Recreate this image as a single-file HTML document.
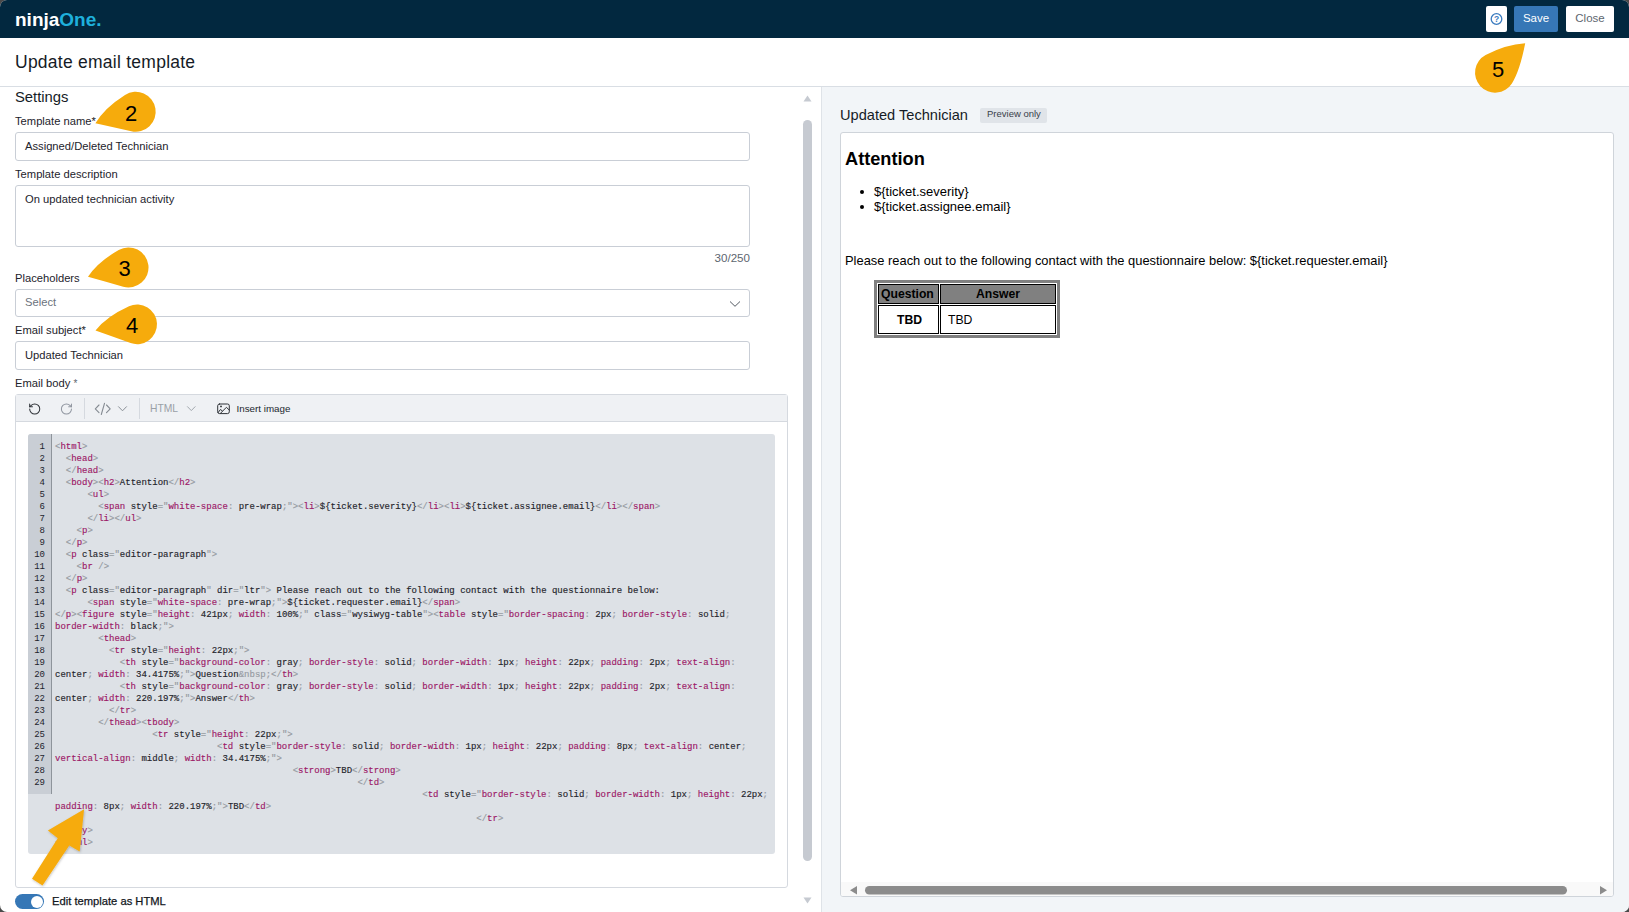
<!DOCTYPE html>
<html><head><meta charset="utf-8">
<style>
*{box-sizing:border-box;margin:0;padding:0}
html,body{width:1629px;height:912px;overflow:hidden;background:#4a4a4a;font-family:"Liberation Sans",sans-serif;color:#1d232c}
#modal{position:absolute;left:0;top:0;width:1629px;height:912px;background:#fff;border-radius:7px;overflow:hidden}
.a{position:absolute;white-space:nowrap;line-height:1}
#hdr{position:absolute;left:0;top:0;width:1629px;height:38px;background:#02283f}
.logo{left:15px;top:10px;font-size:19px;font-weight:bold;color:#fff}
.logo span{color:#1eb0dc}
.btn{position:absolute;top:6px;height:26px;border-radius:2px;font-size:11.5px;line-height:24.5px;text-align:center}
#sep{position:absolute;left:0;top:86px;width:1629px;height:1px;background:#d9dee4}
#right{position:absolute;left:821px;top:87px;width:808px;height:825px;background:#f2f5f8;border-left:1px solid #dfe3e8}
.lbl{font-size:11.2px;color:#1d232c}
.box{position:absolute;border:1px solid #c9ced6;border-radius:3px;background:#fff}
#editor{position:absolute;left:15px;top:394px;width:773px;height:494px;border:1px solid #d5d9df;border-radius:3px;background:#fff}
#tb{position:absolute;left:0;top:0;width:771px;height:27px;background:#eff1f4;border-bottom:1px solid #d5d9df}
#cblk{position:absolute;left:28px;top:434px;width:747px;height:420px;background:#dde1e6;border-radius:3px;overflow:hidden}
#gutbg{position:absolute;left:0;top:0;width:24px;height:360px;background:#c9ced5;border-right:1px solid #8e949b}
#gut{position:absolute;left:0;top:7px;width:17px;text-align:right;font-family:"Liberation Mono",monospace;font-size:9px;line-height:12px;color:#1d232c}
#code{position:absolute;left:27px;top:7px;font-family:"Liberation Mono",monospace;font-size:9px;line-height:12px;color:#1f242b;-webkit-text-stroke:0.15px}
#code i{font-style:normal}
#code i.g{color:#969ba2}
#code i.t{color:#9c1866}
.sbar{position:absolute;background:#c6cad1;border-radius:5px}
</style></head><body>
<div id="modal">
 <div id="hdr">
  <div class="a logo">ninja<span>One.</span></div>
  <div class="btn" style="left:1486px;width:21px;background:#fff">
   <svg width="21" height="26" viewBox="0 0 21 26" style="position:absolute;left:0;top:0"><circle cx="10.5" cy="13" r="5.3" fill="none" stroke="#3a7bbf" stroke-width="1.3"/><text x="10.5" y="16.2" font-size="8.5" font-weight="bold" text-anchor="middle" fill="#3a7bbf" font-family="Liberation Sans">?</text></svg>
  </div>
  <div class="btn" style="left:1514px;width:44px;background:#3677b6;color:#fff">Save</div>
  <div class="btn" style="left:1566px;width:48px;background:#fff;color:#5d6670">Close</div>
 </div>
 <div class="a" style="left:15px;top:54px;font-size:17.5px;letter-spacing:0.25px;color:#151b26">Update email template</div>
 <div id="sep"></div>

 <!-- left panel -->
 <div class="a" style="left:15px;top:90px;font-size:14.8px;color:#151b26">Settings</div>
 <div class="a lbl" style="left:15px;top:116px">Template name*</div>
 <div class="box" style="left:15px;top:132px;width:735px;height:29px"></div>
 <div class="a lbl" style="left:25px;top:141px">Assigned/Deleted Technician</div>
 <div class="a lbl" style="left:15px;top:169px">Template description</div>
 <div class="box" style="left:15px;top:185px;width:735px;height:62px"></div>
 <div class="a lbl" style="left:25px;top:194px">On updated technician activity</div>
 <div class="a lbl" style="left:650px;width:100px;text-align:right;top:252px;font-size:11.6px;color:#5d6670">30/250</div>
 <div class="a lbl" style="left:15px;top:273px">Placeholders</div>
 <div class="box" style="left:15px;top:289px;width:735px;height:28px"></div>
 <div class="a lbl" style="left:25px;top:297px;color:#6b737d">Select</div>
 <svg class="a" style="left:729px;top:299.5px" width="12" height="8" viewBox="0 0 12 8"><path d="M1 1.5 L6 6.3 L11 1.5" fill="none" stroke="#3f4750" stroke-width="0.9"/></svg>
 <div class="a lbl" style="left:15px;top:325px">Email subject*</div>
 <div class="box" style="left:15px;top:341px;width:735px;height:29px"></div>
 <div class="a lbl" style="left:25px;top:350px">Updated Technician</div>
 <div class="a lbl" style="left:15px;top:378px">Email body <span style="color:#5d6670;font-size:10px;position:relative;top:0px">*</span></div>

 <div id="editor">
  <div id="tb"></div>
 </div>
 <div class="a" style="left:150px;top:404px;font-size:10.3px;color:#9aa0a7">HTML</div>
 <div class="a" style="left:236.5px;top:403.5px;font-size:9.8px;color:#22272e">Insert image</div>
 <div id="cblk">
  <div id="gutbg"></div>
  <div id="gut">1<br>2<br>3<br>4<br>5<br>6<br>7<br>8<br>9<br>10<br>11<br>12<br>13<br>14<br>15<br>16<br>17<br>18<br>19<br>20<br>21<br>22<br>23<br>24<br>25<br>26<br>27<br>28<br>29</div><pre id="code"><i class="g">&lt;</i><i class="t">html</i><i class="g">&gt;</i>
  <i class="g">&lt;</i><i class="t">head</i><i class="g">&gt;</i>
  <i class="g">&lt;/</i><i class="t">head</i><i class="g">&gt;</i>
  <i class="g">&lt;</i><i class="t">body</i><i class="g">&gt;</i><i class="g">&lt;</i><i class="t">h2</i><i class="g">&gt;</i>Attention<i class="g">&lt;/</i><i class="t">h2</i><i class="g">&gt;</i>
      <i class="g">&lt;</i><i class="t">ul</i><i class="g">&gt;</i>
        <i class="g">&lt;</i><i class="t">span</i> style<i class="g">=</i><i class="g">"</i><i class="t">white-space</i><i class="g">:</i> pre-wrap<i class="g">;</i><i class="g">"</i><i class="g">&gt;</i><i class="g">&lt;</i><i class="t">li</i><i class="g">&gt;</i>${ticket.severity}<i class="g">&lt;/</i><i class="t">li</i><i class="g">&gt;</i><i class="g">&lt;</i><i class="t">li</i><i class="g">&gt;</i>${ticket.assignee.email}<i class="g">&lt;/</i><i class="t">li</i><i class="g">&gt;</i><i class="g">&lt;/</i><i class="t">span</i><i class="g">&gt;</i>
      <i class="g">&lt;/</i><i class="t">li</i><i class="g">&gt;</i><i class="g">&lt;/</i><i class="t">ul</i><i class="g">&gt;</i>
    <i class="g">&lt;</i><i class="t">p</i><i class="g">&gt;</i>
  <i class="g">&lt;/</i><i class="t">p</i><i class="g">&gt;</i>
  <i class="g">&lt;</i><i class="t">p</i> class<i class="g">=</i><i class="g">"</i>editor-paragraph<i class="g">"</i><i class="g">&gt;</i>
    <i class="g">&lt;</i><i class="t">br</i> <i class="g">/&gt;</i>
  <i class="g">&lt;/</i><i class="t">p</i><i class="g">&gt;</i>
  <i class="g">&lt;</i><i class="t">p</i> class<i class="g">=</i><i class="g">"</i>editor-paragraph<i class="g">"</i> dir<i class="g">=</i><i class="g">"</i>ltr<i class="g">"</i><i class="g">&gt;</i> Please reach out to the following contact with the questionnaire below:
      <i class="g">&lt;</i><i class="t">span</i> style<i class="g">=</i><i class="g">"</i><i class="t">white-space</i><i class="g">:</i> pre-wrap<i class="g">;</i><i class="g">"</i><i class="g">&gt;</i>${ticket.requester.email}<i class="g">&lt;/</i><i class="t">span</i><i class="g">&gt;</i>
<i class="g">&lt;/</i><i class="t">p</i><i class="g">&gt;</i><i class="g">&lt;</i><i class="t">figure</i> style<i class="g">=</i><i class="g">"</i><i class="t">height</i><i class="g">:</i> 421px<i class="g">;</i> <i class="t">width</i><i class="g">:</i> 100%<i class="g">;</i><i class="g">"</i> class<i class="g">=</i><i class="g">"</i>wysiwyg-table<i class="g">"</i><i class="g">&gt;</i><i class="g">&lt;</i><i class="t">table</i> style<i class="g">=</i><i class="g">"</i><i class="t">border-spacing</i><i class="g">:</i> 2px<i class="g">;</i> <i class="t">border-style</i><i class="g">:</i> solid<i class="g">;</i>
<i class="t">border-width</i><i class="g">:</i> black<i class="g">;</i><i class="g">"</i><i class="g">&gt;</i>
        <i class="g">&lt;</i><i class="t">thead</i><i class="g">&gt;</i>
          <i class="g">&lt;</i><i class="t">tr</i> style<i class="g">=</i><i class="g">"</i><i class="t">height</i><i class="g">:</i> 22px<i class="g">;</i><i class="g">"</i><i class="g">&gt;</i>
            <i class="g">&lt;</i><i class="t">th</i> style<i class="g">=</i><i class="g">"</i><i class="t">background-color</i><i class="g">:</i> gray<i class="g">;</i> <i class="t">border-style</i><i class="g">:</i> solid<i class="g">;</i> <i class="t">border-width</i><i class="g">:</i> 1px<i class="g">;</i> <i class="t">height</i><i class="g">:</i> 22px<i class="g">;</i> <i class="t">padding</i><i class="g">:</i> 2px<i class="g">;</i> <i class="t">text-align</i><i class="g">:</i>
center<i class="g">;</i> <i class="t">width</i><i class="g">:</i> 34.4175%<i class="g">;</i><i class="g">"</i><i class="g">&gt;</i>Question<i class="g">&amp;nbsp;</i><i class="g">&lt;/</i><i class="t">th</i><i class="g">&gt;</i>
            <i class="g">&lt;</i><i class="t">th</i> style<i class="g">=</i><i class="g">"</i><i class="t">background-color</i><i class="g">:</i> gray<i class="g">;</i> <i class="t">border-style</i><i class="g">:</i> solid<i class="g">;</i> <i class="t">border-width</i><i class="g">:</i> 1px<i class="g">;</i> <i class="t">height</i><i class="g">:</i> 22px<i class="g">;</i> <i class="t">padding</i><i class="g">:</i> 2px<i class="g">;</i> <i class="t">text-align</i><i class="g">:</i>
center<i class="g">;</i> <i class="t">width</i><i class="g">:</i> 220.197%<i class="g">;</i><i class="g">"</i><i class="g">&gt;</i>Answer<i class="g">&lt;/</i><i class="t">th</i><i class="g">&gt;</i>
          <i class="g">&lt;/</i><i class="t">tr</i><i class="g">&gt;</i>
        <i class="g">&lt;/</i><i class="t">thead</i><i class="g">&gt;</i><i class="g">&lt;</i><i class="t">tbody</i><i class="g">&gt;</i>
                  <i class="g">&lt;</i><i class="t">tr</i> style<i class="g">=</i><i class="g">"</i><i class="t">height</i><i class="g">:</i> 22px<i class="g">;</i><i class="g">"</i><i class="g">&gt;</i>
                              <i class="g">&lt;</i><i class="t">td</i> style<i class="g">=</i><i class="g">"</i><i class="t">border-style</i><i class="g">:</i> solid<i class="g">;</i> <i class="t">border-width</i><i class="g">:</i> 1px<i class="g">;</i> <i class="t">height</i><i class="g">:</i> 22px<i class="g">;</i> <i class="t">padding</i><i class="g">:</i> 8px<i class="g">;</i> <i class="t">text-align</i><i class="g">:</i> center<i class="g">;</i>
<i class="t">vertical-align</i><i class="g">:</i> middle<i class="g">;</i> <i class="t">width</i><i class="g">:</i> 34.4175%<i class="g">;</i><i class="g">"</i><i class="g">&gt;</i>
                                            <i class="g">&lt;</i><i class="t">strong</i><i class="g">&gt;</i>TBD<i class="g">&lt;/</i><i class="t">strong</i><i class="g">&gt;</i>
                                                        <i class="g">&lt;/</i><i class="t">td</i><i class="g">&gt;</i>
                                                                    <i class="g">&lt;</i><i class="t">td</i> style<i class="g">=</i><i class="g">"</i><i class="t">border-style</i><i class="g">:</i> solid<i class="g">;</i> <i class="t">border-width</i><i class="g">:</i> 1px<i class="g">;</i> <i class="t">height</i><i class="g">:</i> 22px<i class="g">;</i>
<i class="t">padding</i><i class="g">:</i> 8px<i class="g">;</i> <i class="t">width</i><i class="g">:</i> 220.197%<i class="g">;</i><i class="g">"</i><i class="g">&gt;</i>TBD<i class="g">&lt;/</i><i class="t">td</i><i class="g">&gt;</i>
                                                                              <i class="g">&lt;/</i><i class="t">tr</i><i class="g">&gt;</i>
<i class="g">&lt;/</i><i class="t">body</i><i class="g">&gt;</i>
<i class="g">&lt;/</i><i class="t">html</i><i class="g">&gt;</i></pre>
 </div>

 <!-- scrollbar left -->
 <svg class="a" style="left:803px;top:94px" width="9" height="8" viewBox="0 0 9 8"><path d="M0.5 7.5 L4.5 1.5 L8.5 7.5Z" fill="#c6cad1"/></svg>
 <div class="sbar" style="left:803px;top:120px;width:9px;height:741px"></div>
 <svg class="a" style="left:803px;top:897px" width="9" height="8" viewBox="0 0 9 8"><path d="M0.5 0.5 L4.5 6.5 L8.5 0.5Z" fill="#c6cad1"/></svg>

 <!-- toggle -->
 <div class="a" style="left:15px;top:894px;width:29px;height:15px;border-radius:7.5px;background:#3677b6"></div>
 <div class="a" style="left:31px;top:895.5px;width:12px;height:12px;border-radius:6px;background:#fff"></div>
 <div class="a lbl" style="left:52px;top:896px;color:#12161c;-webkit-text-stroke:0.25px #12161c">Edit template as HTML</div>

 <div id="right"></div>
 <div class="a" style="left:840px;top:107.5px;font-size:14.6px;color:#151b26">Updated Technician</div>
 <div class="a" style="left:980px;top:108px;width:67px;height:15px;background:#e0e4e9;border-radius:2px"></div>
 <div class="a" style="left:987px;top:109px;font-size:9.5px;color:#3a414a">Preview only</div>
 <div class="a" style="left:840px;top:132px;width:774px;height:765px;background:#fff;border:1px solid #cfd4da;border-radius:3px;overflow:hidden">
  <div class="a" style="left:4px;top:17px;font-size:18.2px;font-weight:bold;color:#000">Attention</div>
  <div class="a" style="left:18.5px;top:57px;width:4px;height:4px;border-radius:50%;background:#000"></div>
  <div class="a" style="left:33px;top:52px;font-size:13px;color:#000">${ticket.severity}</div>
  <div class="a" style="left:18.5px;top:72px;width:4px;height:4px;border-radius:50%;background:#000"></div>
  <div class="a" style="left:33px;top:67px;font-size:13px;color:#000">${ticket.assignee.email}</div>
  <div class="a" style="left:4px;top:122px;font-size:12.9px;color:#000">Please reach out to the following contact with the questionnaire below: ${ticket.requester.email}</div>
  <div class="a" style="left:33px;top:147px;width:186px;height:58px;border:3px solid #808080;background:#fff"></div>
  <div class="a" style="left:37px;top:151px;width:61px;height:20px;border:1px solid #000;background:#808080"></div>
  <div class="a" style="left:99px;top:151px;width:116px;height:20px;border:1px solid #000;background:#808080"></div>
  <div class="a" style="left:37px;top:172px;width:61px;height:29px;border:1px solid #000;background:#fff"></div>
  <div class="a" style="left:99px;top:172px;width:116px;height:29px;border:1px solid #000;background:#fff"></div>
  <div class="a" style="left:40px;top:155px;font-size:12.2px;font-weight:bold;color:#000">Question</div>
  <div class="a" style="left:135px;top:155px;font-size:12.2px;font-weight:bold;color:#000">Answer</div>
  <div class="a" style="left:56px;top:181px;font-size:12.2px;font-weight:bold;color:#000">TBD</div>
  <div class="a" style="left:107px;top:181px;font-size:12.2px;color:#000">TBD</div>
  <div class="a" style="left:0;top:749px;width:772px;height:15px;background:#f9f9f9"></div>
  <svg class="a" style="left:0;top:0" width="772" height="764" viewBox="840 132 772 764">
   <path d="M856 885 L849 889.2 L856 893.5Z" fill="#8c8c8c"/>
   <rect x="864" y="885" width="702" height="8.5" rx="4.25" fill="#8c8c8c"/>
   <path d="M1599 885 L1606 889.2 L1599 893.5Z" fill="#8c8c8c"/>
  </svg>
 </div>

 <svg class="a" style="left:0;top:0;pointer-events:none" width="1629" height="912" viewBox="0 0 1629 912">
  <defs><filter id="sh" x="-20%" y="-20%" width="140%" height="140%"><feDropShadow dx="0.5" dy="1" stdDeviation="1.2" flood-color="#000" flood-opacity="0.25"/></filter></defs>
  <!-- toolbar icons -->
  <g fill="none" stroke-linecap="round" stroke-linejoin="round">
   <g transform="translate(28.0,402.3) scale(0.56)" stroke="#2f3338" stroke-width="1.8"><path d="M3 12a9 9 0 1 0 9-9 9.75 9.75 0 0 0-6.74 2.74L3 8"/><path d="M3 3v5h5"/></g>
   <g transform="translate(59.7,402.3) scale(0.56)" stroke="#9096a0" stroke-width="1.8"><path d="M21 12a9 9 0 1 1-9-9c2.52 0 4.93 1 6.74 2.74L21 8"/><path d="M21 3v5h-5"/></g>
   <path d="M99 405 L95.3 408.8 L99 412.6 M104.5 403.3 L101.3 414.5 M106.5 405 L110.2 408.8 L106.5 412.6" stroke="#858b92" stroke-width="1.1"/>
   <path d="M118.5 406.7 L122.5 410.8 L126.5 406.7" stroke="#8a9097" stroke-width="1"/>
   <path d="M187.5 406.7 L191.3 410.6 L195.1 406.7" stroke="#a2a8ae" stroke-width="1"/>
   <rect x="217.7" y="404" width="11.6" height="9.6" rx="1.8" stroke="#2f3338" stroke-width="1"/>
   <path d="M218.1 412.6 L220.4 409.5 L222.1 410.7 M220.3 413.5 L226.4 407.3 L229.1 409.9" stroke="#2f3338" stroke-width="1"/>
  </g>
  <circle cx="221" cy="406.4" r="0.95" fill="#2f3338"/>
  <line x1="84.5" y1="398" x2="84.5" y2="419" stroke="#d5d9df" stroke-width="1"/>
  <line x1="139.5" y1="398" x2="139.5" y2="419" stroke="#d5d9df" stroke-width="1"/>
  <!-- callouts -->
  <g fill="#f6ab0c">
   <path d="M95.4 123.3 Q104.2 108.1 125.0 94.9 A20.0 20.0 0 1 1 131.3 131.3 Q113.4 127.3 95.4 123.3 Z"/>
   <path d="M88.0 276.8 Q97.5 262.1 118.7 250.0 A20.0 20.0 0 1 1 123.2 286.7 Q105.6 281.7 88.0 276.8 Z"/>
   <path d="M95.5 330.5 Q106.4 316.6 129.0 306.3 A19.8 19.8 0 1 1 130.6 343.0 Q113.0 336.7 95.5 330.5 Z"/>
   <path d="M1525.2 43.2 Q1519.8 70.9 1511.9 83.4 A20.0 20.0 0 1 1 1485.6 55.0 Q1505.7 44.4 1525.2 43.2 Z"/>
   <path filter="url(#sh)" d="M84.1 809.2 L79.7 851.4 L69.3 845.4 L42.5 885.4 L32 878.8 L57.8 838.3 L47.9 830.6 Z"/>
  </g>
  <g font-family="Liberation Sans" font-size="22" fill="#000" text-anchor="middle">
   <text x="131" y="121">2</text>
   <text x="124.5" y="276">3</text>
   <text x="132" y="333">4</text>
   <text x="1498" y="77">5</text>
  </g>
 </svg>
</div>
</body></html>
